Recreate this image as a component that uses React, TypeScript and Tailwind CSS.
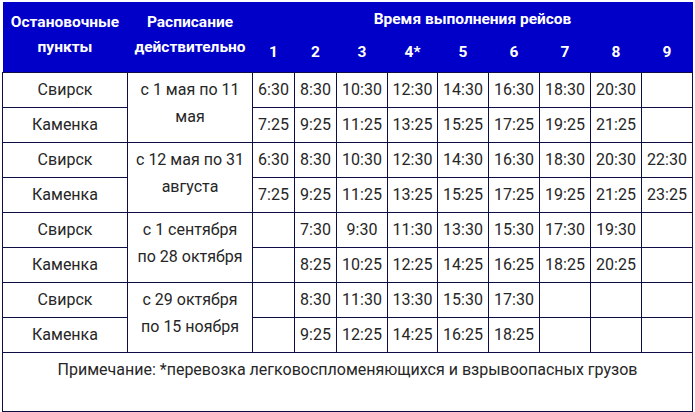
const widths = [125, 125, 42, 42, 51, 50, 51, 51, 51, 51, 51];

const blocks = [
  {
    period: ['с 1 мая по 11', 'мая'],
    svirsk: ['6:30', '8:30', '10:30', '12:30', '14:30', '16:30', '18:30', '20:30', ''],
    kamenka: ['7:25', '9:25', '11:25', '13:25', '15:25', '17:25', '19:25', '21:25', ''],
  },
  {
    period: ['с 12 мая по 31', 'августа'],
    svirsk: ['6:30', '8:30', '10:30', '12:30', '14:30', '16:30', '18:30', '20:30', '22:30'],
    kamenka: ['7:25', '9:25', '11:25', '13:25', '15:25', '17:25', '19:25', '21:25', '23:25'],
  },
  {
    period: ['с 1 сентября', 'по 28 октября'],
    svirsk: ['', '7:30', '9:30', '11:30', '13:30', '15:30', '17:30', '19:30', ''],
    kamenka: ['', '8:25', '10:25', '12:25', '14:25', '16:25', '18:25', '20:25', ''],
  },
  {
    period: ['с 29 октября', 'по 15 ноября'],
    svirsk: ['', '8:30', '11:30', '13:30', '15:30', '17:30', '', '', ''],
    kamenka: ['', '9:25', '12:25', '14:25', '16:25', '18:25', '', '', ''],
  },
];

const cell = 'border border-[#0e0e46] text-center align-middle p-0';

export default function App() {
  return (
    <div
      className="bg-white p-[2px] text-[16px] text-[#262626]"
      style={{ fontFamily: 'Roboto, "Liberation Sans", sans-serif' }}
    >
      <table className="w-[691px] table-fixed border-collapse">
        <colgroup>
          {widths.map((w, i) => (
            <col key={i} style={{ width: w }} />
          ))}
        </colgroup>
        <thead className="bg-[#0000c8] text-[15.5px] font-bold text-white">
          <tr className="h-[34px]">
            <th rowSpan={2} className="p-0 pb-1 align-middle leading-[25px]">
              Остановочные
              <br />
              пункты
            </th>
            <th rowSpan={2} className="p-0 pb-1 align-middle leading-[25px]">
              Расписание
              <br />
              действительно
            </th>
            <th colSpan={9} className="p-0 pt-[2px] align-middle">
              Время выполнения рейсов
            </th>
          </tr>
          <tr className="h-[36px]">
            {['1', '2', '3', '4*', '5', '6', '7', '8', '9'].map((n) => (
              <th key={n} className="p-0 pb-[2px] align-middle">
                {n}
              </th>
            ))}
          </tr>
        </thead>
        <tbody>
          {blocks.map((b, i) => (
            <>
              <tr key={`s${i}`} className="h-[35px]">
                <td className={cell}>Свирск</td>
                <td rowSpan={2} className={`${cell} pb-2 leading-[27px]`}>
                  {b.period[0]}
                  <br />
                  {b.period[1]}
                </td>
                {b.svirsk.map((t, j) => (
                  <td key={j} className={cell}>
                    {t}
                  </td>
                ))}
              </tr>
              <tr key={`k${i}`} className="h-[35px]">
                <td className={cell}>Каменка</td>
                {b.kamenka.map((t, j) => (
                  <td key={j} className={cell}>
                    {t}
                  </td>
                ))}
              </tr>
            </>
          ))}
          <tr className="h-[59px]">
            <td colSpan={11} className="border border-[#0e0e46] p-0 pt-[5px] text-center align-top">
              Примечание: *перевозка легковоспломеняющихся и взрывоопасных грузов
            </td>
          </tr>
        </tbody>
      </table>
    </div>
  );
}
